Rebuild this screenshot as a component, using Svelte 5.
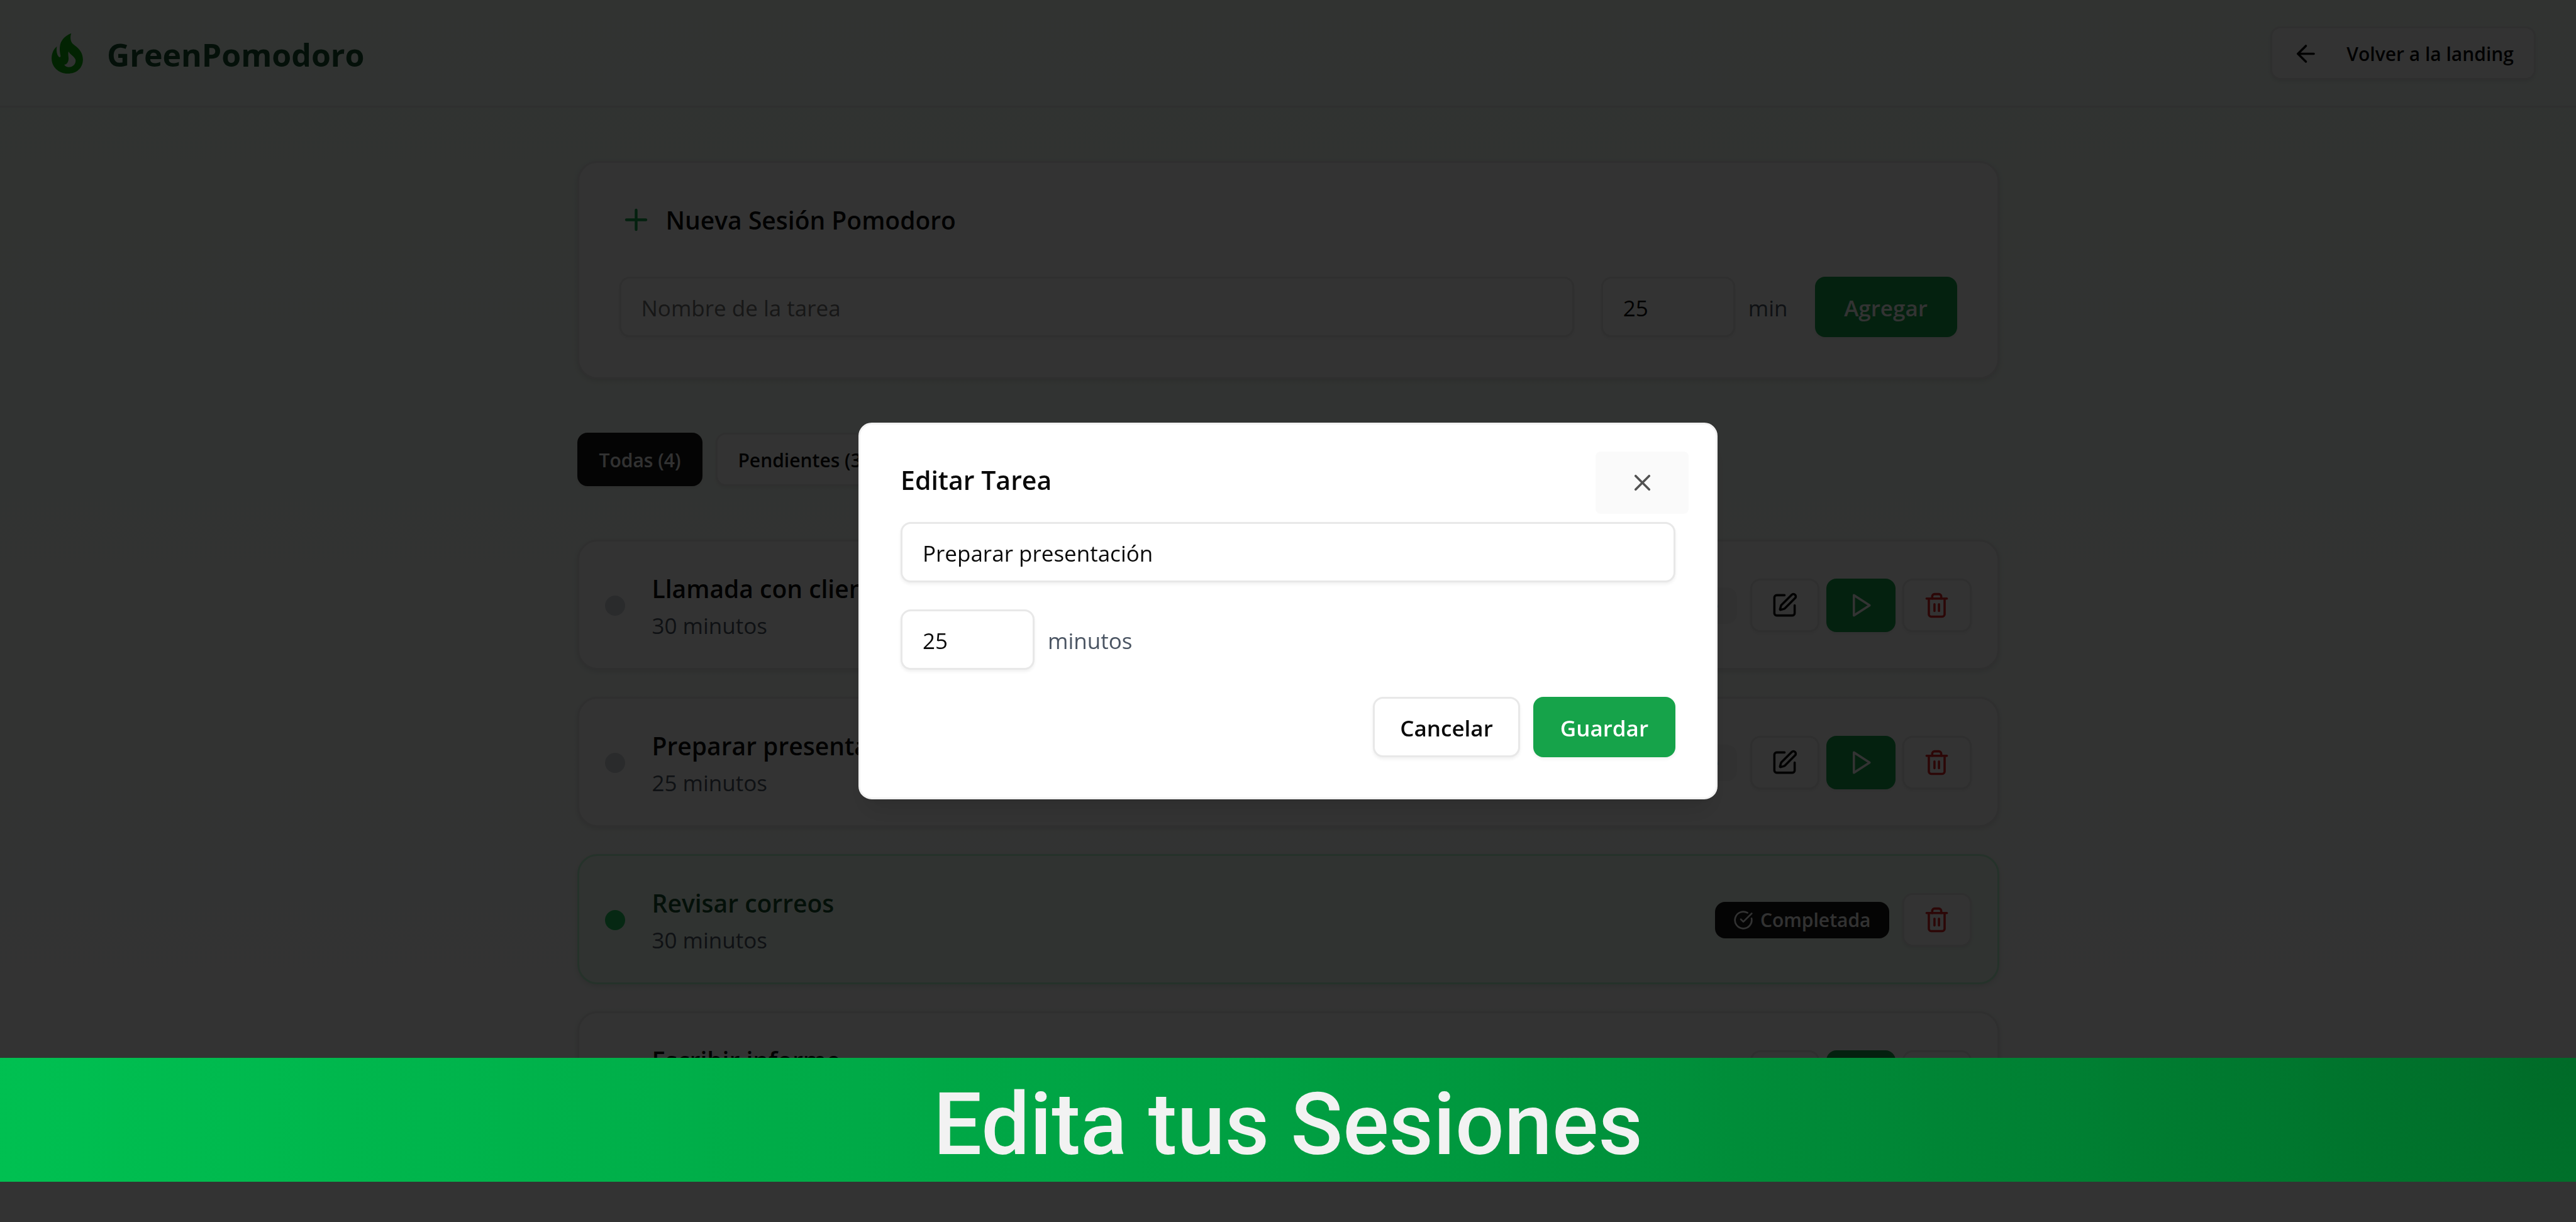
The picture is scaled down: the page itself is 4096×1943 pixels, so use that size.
<script lang="ts">
  type Task = { id: number; title: string; minutes: number; done: boolean };

  let tasks: Task[] = $state([
    { id: 1, title: 'Llamada con cliente', minutes: 30, done: false },
    { id: 2, title: 'Preparar presentación', minutes: 25, done: false },
    { id: 3, title: 'Revisar correos', minutes: 30, done: true },
    { id: 4, title: 'Escribir informe', minutes: 45, done: false }
  ]);

  let newTitle = $state('');
  let newMinutes = $state(25);
  let editTitle = $state('Preparar presentación');
  let editMinutes = $state(25);

  const pending = $derived(tasks.filter((t) => !t.done).length);
  const completed = $derived(tasks.length - pending);
</script>

<div class="page">
  <header class="topbar">
    <div class="brand">
      <span class="brand-mark">
        <svg class="flame" viewBox="52 45 161 207" aria-hidden="true">
          <path
            fill-rule="evenodd"
            d="M153 45C147 60 147 84 160 98C176 112 213 132 213 180C212 225 180 252 135 252C85 252 52 215 52 175C52 150 60 128 79 112C76 126 76 150 88 165C93 171 99 168 98 160C91 130 92 100 105 82C118 62 135 52 153 45ZM139 138C134 155 142 170 138 185C135 196 128 207 117 206C120 213 128 218 138 219C160 220 178 204 175 181C170 164 146 154 139 138Z"
          />
        </svg>
      </span>
      <h1>GreenPomodoro</h1>
    </div>
    <button class="btn small outline back" type="button">
      <svg class="icon" viewBox="0 0 24 24" aria-hidden="true"><path d="m12 19-7-7 7-7" /><path d="M19 12H5" /></svg>
      Volver a la landing
    </button>
  </header>

  <main>
    <section class="card new-session">
      <h2>
        <svg class="icon plus" viewBox="0 0 24 24" aria-hidden="true"><path d="M5 12h14" /><path d="M12 5v14" /></svg>
        Nueva Sesión Pomodoro
      </h2>
      <form class="new-form" onsubmit={(e) => e.preventDefault()}>
        <input class="field grow" type="text" placeholder="Nombre de la tarea" aria-label="Nombre de la tarea" bind:value={newTitle} />
        <div class="minutes">
          <input id="new-minutes" class="field number" type="number" bind:value={newMinutes} />
          <label for="new-minutes">min</label>
        </div>
        <button class="btn primary" type="submit">Agregar</button>
      </form>
    </section>

    <nav class="filters" aria-label="Filtros">
      <button class="btn small dark" type="button">Todas ({tasks.length})</button>
      <button class="btn small outline" type="button">Pendientes ({pending})</button>
      <button class="btn small outline" type="button">Completadas ({completed})</button>
    </nav>

    <ul class="tasks">
      {#each tasks as task (task.id)}
        <li class="card task" class:done={task.done}>
          <span class="dot"></span>
          <div class="info">
            <h3>{task.title}</h3>
            <p>{task.minutes} minutos</p>
          </div>
          {#if task.done}
            <span class="badge dark">
              <svg class="icon check" viewBox="0 0 24 24" aria-hidden="true"><path d="M21.801 10A10 10 0 1 1 17 3.335" /><path d="m9 11 3 3L22 4" /></svg>
              Completada
            </span>
          {:else}
            <span class="badge">Pendiente</span>
          {/if}
          <div class="actions">
            {#if !task.done}
              <button class="btn small outline square" type="button" aria-label="Editar">
                <svg class="icon" viewBox="0 0 24 24" aria-hidden="true">
                  <path d="M12 3H5a2 2 0 0 0-2 2v14a2 2 0 0 0 2 2h14a2 2 0 0 0 2-2v-7" />
                  <path d="M18.375 2.625a1 1 0 0 1 3 3l-9.013 9.014a2 2 0 0 1-.853.505l-2.873.84a.5.5 0 0 1-.62-.62l.84-2.873a2 2 0 0 1 .506-.852z" />
                </svg>
              </button>
              <button class="btn small primary square" type="button" aria-label="Iniciar">
                <svg class="icon" viewBox="0 0 24 24" aria-hidden="true"><polygon points="6 3 20 12 6 21 6 3" /></svg>
              </button>
            {/if}
            <button class="btn small outline square danger" type="button" aria-label="Eliminar">
              <svg class="icon" viewBox="0 0 24 24" aria-hidden="true">
                <path d="M3 6h18" />
                <path d="M19 6v14c0 1-1 2-2 2H7c-1 0-2-1-2-2V6" />
                <path d="M8 6V4c0-1 1-2 2-2h4c1 0 2 1 2 2v2" />
                <path d="M10 11v6" />
                <path d="M14 11v6" />
              </svg>
            </button>
          </div>
        </li>
      {/each}
    </ul>
  </main>
</div>

<div class="overlay">
  <div class="dialog" role="dialog" aria-modal="true" aria-labelledby="dialog-title">
    <h2 id="dialog-title">Editar Tarea</h2>
    <input class="field" type="text" aria-label="Nombre de la tarea" bind:value={editTitle} />
    <div class="minutes">
      <input id="edit-minutes" class="field number" type="number" bind:value={editMinutes} />
      <label for="edit-minutes">minutos</label>
    </div>
    <div class="dialog-actions">
      <button class="btn outline" type="button">Cancelar</button>
      <button class="btn primary" type="button">Guardar</button>
    </div>
    <button class="close" type="button" aria-label="Cerrar">
      <svg class="icon" viewBox="0 0 24 24" aria-hidden="true"><path d="M18 6 6 18" /><path d="m6 6 12 12" /></svg>
    </button>
  </div>
</div>

<div class="banner">Edita tus Sesiones</div>

<style>
  :global(body) {
    margin: 0;
    background: #fff;
  }

  .page,
  .overlay,
  .banner {
    box-sizing: border-box;
    font-family: 'Segoe UI', 'Open Sans', 'Noto Sans', sans-serif;
    color: #0a0a0a;
  }

  .page *,
  .overlay * {
    box-sizing: border-box;
    font-family: inherit;
  }

  h1,
  h2,
  h3,
  p,
  ul {
    margin: 0;
    padding: 0;
  }

  .page {
    min-height: 100vh;
    background: linear-gradient(to bottom, #f0fdf4, #fff);
  }

  .topbar {
    display: flex;
    align-items: center;
    justify-content: space-between;
    padding: 42px 64px 41px;
    border-bottom: 3px solid #e8e8e8;
    background: rgba(255, 255, 255, 0.2);
  }

  .brand {
    display: flex;
    align-items: center;
    gap: 21px;
  }

  .brand-mark {
    display: flex;
    align-items: center;
    justify-content: center;
    width: 85px;
    height: 85px;
  }

  .flame {
    width: 50px;
    height: 64px;
    fill: #0cae0c;
  }

  h1 {
    padding-top: 6px;
    font-size: 50px;
    line-height: 75px;
    font-weight: 700;
    color: #14532d;
  }

  .icon {
    flex: none;
    width: 43px;
    height: 43px;
    fill: none;
    stroke: currentColor;
    stroke-width: 2;
    stroke-linecap: round;
    stroke-linejoin: round;
  }

  .btn {
    display: inline-flex;
    align-items: center;
    justify-content: center;
    height: 96px;
    padding: 3px 43px 0;
    border: none;
    border-radius: 16px;
    font-size: 35px;
    font-weight: 600;
    white-space: nowrap;
    color: #0a0a0a;
    box-shadow: 0 3px 5px rgba(0, 0, 0, 0.06);
  }

  .btn.outline {
    padding: 3px 40px 0;
    border: 3px solid #e8e8e8;
    background: #fff;
  }

  .btn.primary {
    min-width: 226px;
    background: #16a34a;
    color: #fff;
  }

  .btn.small {
    height: 85px;
    padding: 2px 32px 0;
    font-size: 30px;
  }

  .btn.dark {
    padding: 2px 35px 0;
    background: #171717;
    color: #fafafa;
  }

  .btn.square {
    width: 110px;
    min-width: 0;
    padding: 0;
  }

  .btn.danger {
    color: #dc2626;
  }

  .btn.back {
    gap: 43px;
  }

  main {
    max-width: 2389px;
    margin: 0 auto;
    padding: 85px 64px;
    box-sizing: border-box;
  }

  .card {
    border: 3px solid #e8e8e8;
    border-radius: 32px;
    background: #fff;
    box-shadow: 0 3px 8px rgba(0, 0, 0, 0.1);
  }

  .new-session {
    padding: 64px;
  }

  .new-session h2 {
    display: flex;
    align-items: center;
    gap: 21px;
    margin-bottom: 64px;
    font-size: 39px;
    line-height: 53px;
    font-weight: 600;
  }

  .plus {
    width: 53px;
    height: 53px;
    color: #16a34a;
  }

  .new-form {
    display: flex;
    gap: 43px;
  }

  .field {
    width: 100%;
    height: 96px;
    padding: 3px 32px 0;
    border: 3px solid #e8e8e8;
    border-radius: 16px;
    background: #fff;
    font-size: 35px;
    color: #0a0a0a;
    box-shadow: 0 3px 5px rgba(0, 0, 0, 0.06);
  }

  .field::placeholder {
    color: #737373;
    opacity: 1;
  }

  .field.grow {
    flex: 1;
    min-width: 0;
  }

  .field.number {
    width: 213px;
    appearance: textfield;
  }

  .field.number::-webkit-inner-spin-button {
    appearance: none;
    margin: 0;
  }

  .minutes {
    display: flex;
    align-items: center;
    gap: 21px;
    font-size: 35px;
    color: #4b5563;
  }

  .minutes label {
    padding-top: 3px;
  }

  .filters {
    display: flex;
    gap: 21px;
    margin: 85px 0;
  }

  .tasks {
    display: grid;
    gap: 43px;
    list-style: none;
  }

  .task {
    display: flex;
    align-items: center;
    padding: 43px 41px 41px;
  }

  .task.done {
    border-color: #bbf7d0;
    background: #f0fdf4;
  }

  .dot {
    flex: none;
    width: 32px;
    height: 32px;
    margin-right: 43px;
    border-radius: 50%;
    background: #d1d5db;
  }

  .done .dot {
    background: #22c55e;
  }

  .info {
    flex: 1;
  }

  h3 {
    font-size: 39px;
    line-height: 64px;
    font-weight: 600;
  }

  .done h3 {
    color: #14532d;
  }

  .info p {
    font-size: 35px;
    line-height: 53px;
    color: #4b5563;
  }

  .badge {
    display: flex;
    align-items: center;
    gap: 11px;
    height: 58px;
    padding: 0 29px;
    margin-right: 21px;
    border-radius: 16px;
    background: #f5f5f5;
    font-size: 30px;
    font-weight: 600;
    color: #171717;
  }

  .badge.dark {
    background: #171717;
    color: #fafafa;
  }

  .check {
    width: 32px;
    height: 32px;
  }

  .actions {
    display: flex;
    gap: 11px;
  }

  .overlay {
    position: fixed;
    inset: 0;
    display: flex;
    align-items: center;
    justify-content: center;
    background: rgba(0, 0, 0, 0.8);
  }

  .dialog {
    position: relative;
    display: grid;
    gap: 43px;
    width: 100%;
    max-width: 1366px;
    padding: 64px;
    border: 3px solid #f2f2f2;
    border-radius: 21px;
    background: #fff;
    box-shadow: 0 27px 40px -8px rgba(0, 0, 0, 0.1), 0 11px 16px -11px rgba(0, 0, 0, 0.1);
  }

  .dialog h2 {
    font-size: 41px;
    line-height: 48px;
    font-weight: 600;
  }

  .dialog-actions {
    display: flex;
    justify-content: flex-end;
    gap: 21px;
  }

  .close {
    position: absolute;
    top: 43px;
    right: 43px;
    display: flex;
    align-items: center;
    justify-content: center;
    width: 148px;
    height: 99px;
    padding: 0;
    border: none;
    border-radius: 8px;
    background: #fafafa;
    color: #525252;
  }

  .banner {
    position: fixed;
    right: 0;
    bottom: 64px;
    left: 0;
    padding: 10px 0 0;
    height: 197px;
    background: radial-gradient(circle at top right, #006b28 0%, #009f42 50%, #00c051 100%);
    font-family: 'Bahnschrift', Roboto, sans-serif;
    font-size: 137px;
    line-height: 192px;
    font-weight: 500;
    text-align: center;
    color: #f2f2f2;
  }
</style>
